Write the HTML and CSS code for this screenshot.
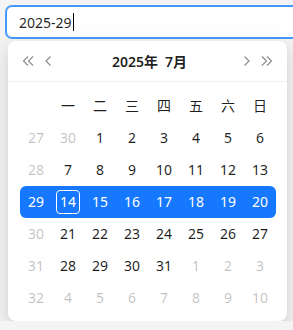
FILE: index.html
```html
<!DOCTYPE html>
<html lang="zh-CN">
<head>
    <meta charset="UTF-8">
    <meta name="viewport" content="width=device-width, initial-scale=1.0">
    <title>Week Picker</title>
    <link rel="stylesheet" href="styles.css">
</head>
<body>
    <!-- Week input -->
    <div class="picker-input">
        <span class="picker-value">2025-29</span><span class="caret"></span>
    </div>

    <!-- Dropdown panel -->
    <div class="picker-dropdown">
        <div class="picker-header">
            <svg class="nav-icon wide" viewBox="0 0 12 10"><path d="M6 0.5 L1.5 5 L6 9.5 M11 0.5 L6.5 5 L11 9.5"/></svg>
            <svg class="nav-icon" viewBox="0 0 6 10"><path d="M5.5 0.5 L1 5 L5.5 9.5"/></svg>
            <div class="picker-title"><span>2025年</span><span>7月</span></div>
            <svg class="nav-icon" viewBox="0 0 6 10"><path d="M0.5 0.5 L5 5 L0.5 9.5"/></svg>
            <svg class="nav-icon wide" viewBox="0 0 12 10"><path d="M1 0.5 L5.5 5 L1 9.5 M6 0.5 L10.5 5 L6 9.5"/></svg>
        </div>

        <div class="picker-body">
            <div class="week-row head">
                <div class="cell"></div>
                <div class="cell">一</div>
                <div class="cell">二</div>
                <div class="cell">三</div>
                <div class="cell">四</div>
                <div class="cell">五</div>
                <div class="cell">六</div>
                <div class="cell">日</div>
            </div>
            <div class="week-row">
                <div class="cell muted">27</div>
                <div class="cell muted">30</div>
                <div class="cell">1</div>
                <div class="cell">2</div>
                <div class="cell">3</div>
                <div class="cell">4</div>
                <div class="cell">5</div>
                <div class="cell">6</div>
            </div>
            <div class="week-row">
                <div class="cell muted">28</div>
                <div class="cell">7</div>
                <div class="cell">8</div>
                <div class="cell">9</div>
                <div class="cell">10</div>
                <div class="cell">11</div>
                <div class="cell">12</div>
                <div class="cell">13</div>
            </div>
            <div class="week-row selected">
                <div class="cell">29</div>
                <div class="cell"><span class="today">14</span></div>
                <div class="cell">15</div>
                <div class="cell">16</div>
                <div class="cell">17</div>
                <div class="cell">18</div>
                <div class="cell">19</div>
                <div class="cell">20</div>
            </div>
            <div class="week-row">
                <div class="cell muted">30</div>
                <div class="cell">21</div>
                <div class="cell">22</div>
                <div class="cell">23</div>
                <div class="cell">24</div>
                <div class="cell">25</div>
                <div class="cell">26</div>
                <div class="cell">27</div>
            </div>
            <div class="week-row">
                <div class="cell muted">31</div>
                <div class="cell">28</div>
                <div class="cell">29</div>
                <div class="cell">30</div>
                <div class="cell">31</div>
                <div class="cell muted">1</div>
                <div class="cell muted">2</div>
                <div class="cell muted">3</div>
            </div>
            <div class="week-row">
                <div class="cell muted">32</div>
                <div class="cell muted">4</div>
                <div class="cell muted">5</div>
                <div class="cell muted">6</div>
                <div class="cell muted">7</div>
                <div class="cell muted">8</div>
                <div class="cell muted">9</div>
                <div class="cell muted">10</div>
            </div>
        </div>
    </div>
</body>
</html>
```

FILE: styles.css
```css
/* Page */
body {
    margin: 0;
    padding: 6px 0 0 6px;
    background-color: #f4f4f4;
    font-family: "Noto Sans", "Noto Sans CJK SC", sans-serif;
    font-size: 14px;
    color: rgba(0, 0, 0, 0.88);
    overflow: hidden;
}

/* Input */
.picker-input {
    width: 320px;
    height: 30px;
    box-sizing: content-box;
    padding: 0 11px;
    background-color: #fff;
    border: 1px solid #4096ff;
    border-radius: 6px;
    box-shadow: 0 0 0 1px #4a9bfa;
    display: flex;
    align-items: center;
    font-size: 14px;
}
.picker-value {
    padding-left: 1px;
}
.caret {
    display: inline-block;
    width: 1px;
    height: 18px;
    margin-left: 1px;
    background-color: #000;
}

/* Dropdown */
.picker-dropdown {
    width: 279px;
    margin: 3px 0 0 2px;
    background-color: #fff;
    border-radius: 8px;
    box-shadow: 0 6px 16px 0 rgba(0,0,0,0.08), 0 3px 6px -4px rgba(0,0,0,0.12), 0 9px 28px 8px rgba(0,0,0,0.05);
}
.picker-header {
    height: 40px;
    padding: 0 14px;
    display: flex;
    align-items: center;
    border-bottom: 1px solid #f0f0f0;
}
.nav-icon {
    width: 6px;
    height: 10px;
    fill: none;
    stroke: rgba(0, 0, 0, 0.45);
    stroke-width: 1.2;
}
.nav-icon.wide {
    width: 12px;
}
.picker-header .nav-icon:first-child {
    margin-right: 11px;
}
.picker-header .nav-icon:nth-last-child(2) {
    margin-right: 11px;
}
.picker-title {
    flex: 1;
    display: flex;
    justify-content: center;
    gap: 7px;
    font-weight: 600;
    margin-left: 4px;
}

/* Calendar grid */
.picker-body {
    padding: 8px 11px 7px 12px;
}
.week-row {
    display: grid;
    grid-template-columns: repeat(8, 32px);
    height: 32px;
}
.cell {
    display: flex;
    align-items: center;
    justify-content: center;
    line-height: 24px;
}
.muted {
    color: rgba(0, 0, 0, 0.25);
}
.week-row.selected {
    background-color: #1677ff;
    color: #fff;
    border-radius: 6px;
}
.today {
    width: 22px;
    height: 22px;
    border: 1px solid #fff;
    border-radius: 4px;
    display: flex;
    align-items: center;
    justify-content: center;
}
```
